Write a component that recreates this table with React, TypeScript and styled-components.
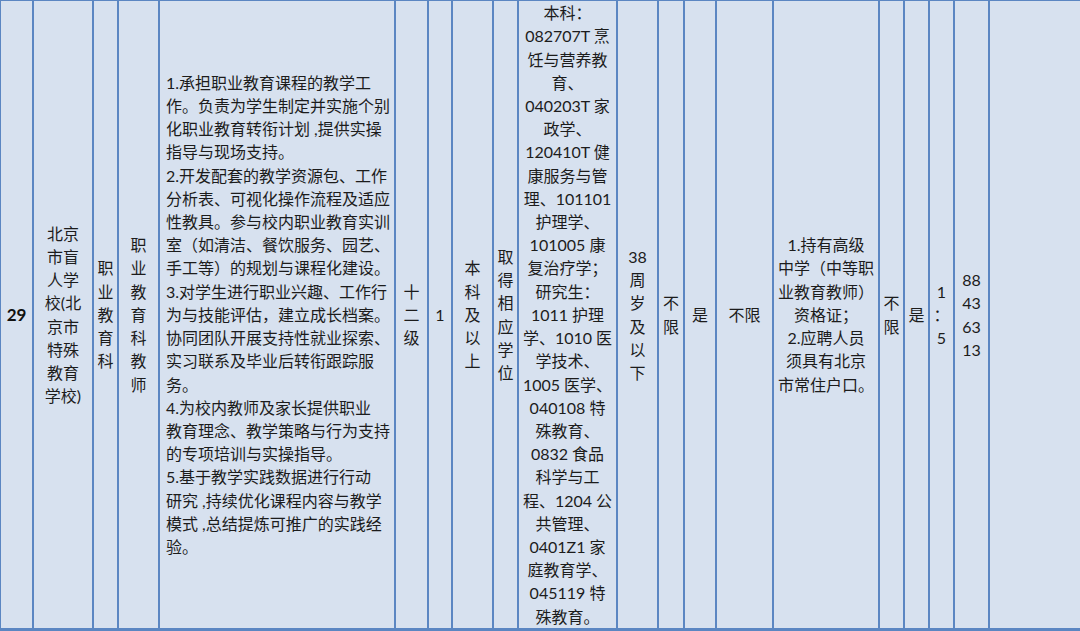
import React from 'react';
import styled, { createGlobalStyle } from 'styled-components';

const GlobalStyle = createGlobalStyle`
  html, body {
    margin: 0;
    padding: 0;
    background: #d7e1ef;
  }
  body {
    font-family: "Lato", "Noto Sans CJK SC", sans-serif;
    color: #1c1c1c;
  }
`;

const COLUMNS = [33, 60, 25, 41, 236, 33, 24, 41, 25, 99, 41, 26, 32, 57, 106, 25, 25, 25, 35, 90];

const Row = styled.div`
  display: grid;
  grid-template-columns: ${COLUMNS.map((w) => `${w}px`).join(' ')};
  width: 1080px;
  height: 631px;
  box-sizing: border-box;
  background: #d7e1ef;
  border-top: 1px solid #5b86c2;
  border-bottom: 3px solid #5b86c2;
  border-left: 1px solid #5b86c2;
`;

const Cell = styled.div<{ $align?: 'left' | 'center'; $pad?: number; $last?: boolean }>`
  box-sizing: border-box;
  display: flex;
  flex-direction: column;
  justify-content: center;
  align-items: ${(p) => (p.$align === 'left' ? 'flex-start' : 'center')};
  text-align: ${(p) => p.$align ?? 'center'};
  padding: 0 ${(p) => p.$pad ?? 0}px;
  border-right: ${(p) => (p.$last ? 'none' : '2px solid #5b86c2')};
  font-size: 16px;
  overflow: visible;
`;

const Line = styled.div`
  white-space: nowrap;
  line-height: 23.2px;
`;

const Number = styled.div`
  font-size: 17px;
  font-weight: 700;
  line-height: 23px;
  color: #111;
`;

const Lines: React.FC<{ items: string[] }> = ({ items }) => (
  <>
    {items.map((t, i) => (
      <Line key={i}>{t}</Line>
    ))}
  </>
);

const chars = (s: string) => Array.from(s);

const duties = [
  '1.承担职业教育课程的教学工',
  '作。负责为学生制定并实施个别',
  '化职业教育转衔计划 ,提供实操',
  '指导与现场支持。',
  '2.开发配套的教学资源包、工作',
  '分析表、可视化操作流程及适应',
  '性教具。参与校内职业教育实训',
  '室（如清洁、餐饮服务、园艺、',
  '手工等）的规划与课程化建设。',
  '3.对学生进行职业兴趣、工作行',
  '为与技能评估，建立成长档案。',
  '协同团队开展支持性就业探索、',
  '实习联系及毕业后转衔跟踪服',
  '务。',
  '4.为校内教师及家长提供职业',
  '教育理念、教学策略与行为支持',
  '的专项培训与实操指导。',
  '5.基于教学实践数据进行行动',
  '研究 ,持续优化课程内容与教学',
  '模式 ,总结提炼可推广的实践经',
  '验。',
];

const majors = [
  '本科：',
  '082707T 烹',
  '饪与营养教',
  '育、',
  '040203T 家',
  '政学、',
  '120410T 健',
  '康服务与管',
  '理、101101',
  '护理学、',
  '101005 康',
  '复治疗学；',
  '研究生：',
  '1011 护理',
  '学、1010 医',
  '学技术、',
  '1005 医学、',
  '040108 特',
  '殊教育、',
  '0832 食品',
  '科学与工',
  '程、1204 公',
  '共管理、',
  '0401Z1 家',
  '庭教育学、',
  '045119 特',
  '殊教育。',
];

const requirements = [
  '1.持有高级',
  '中学（中等职',
  '业教育教师）',
  '资格证；',
  '2.应聘人员',
  '须具有北京',
  '市常住户口。',
];

const App: React.FC = () => {
  return (
    <>
      <GlobalStyle />
      <Row>
        <Cell>
          <Number>29</Number>
        </Cell>
        <Cell>
          <Lines items={['北京', '市盲', '人学', '校(北', '京市', '特殊', '教育', '学校)']} />
        </Cell>
        <Cell>
          <Lines items={chars('职业教育科')} />
        </Cell>
        <Cell>
          <Lines items={chars('职业教育科教师')} />
        </Cell>
        <Cell $align="left" $pad={6}>
          <Lines items={duties} />
        </Cell>
        <Cell>
          <Lines items={chars('十二级')} />
        </Cell>
        <Cell>
          <Lines items={['1']} />
        </Cell>
        <Cell>
          <Lines items={chars('本科及以上')} />
        </Cell>
        <Cell>
          <Lines items={chars('取得相应学位')} />
        </Cell>
        <Cell>
          <Lines items={majors} />
        </Cell>
        <Cell>
          <Lines items={['38', '周', '岁', '及', '以', '下']} />
        </Cell>
        <Cell>
          <Lines items={chars('不限')} />
        </Cell>
        <Cell>
          <Lines items={['是']} />
        </Cell>
        <Cell>
          <Lines items={['不限']} />
        </Cell>
        <Cell>
          <Lines items={requirements} />
        </Cell>
        <Cell>
          <Lines items={chars('不限')} />
        </Cell>
        <Cell>
          <Lines items={['是']} />
        </Cell>
        <Cell>
          <Lines items={['1', '：', '5']} />
        </Cell>
        <Cell>
          <Lines items={['88', '43', '63', '13']} />
        </Cell>
        <Cell $last />
      </Row>
    </>
  );
};

export default App;
